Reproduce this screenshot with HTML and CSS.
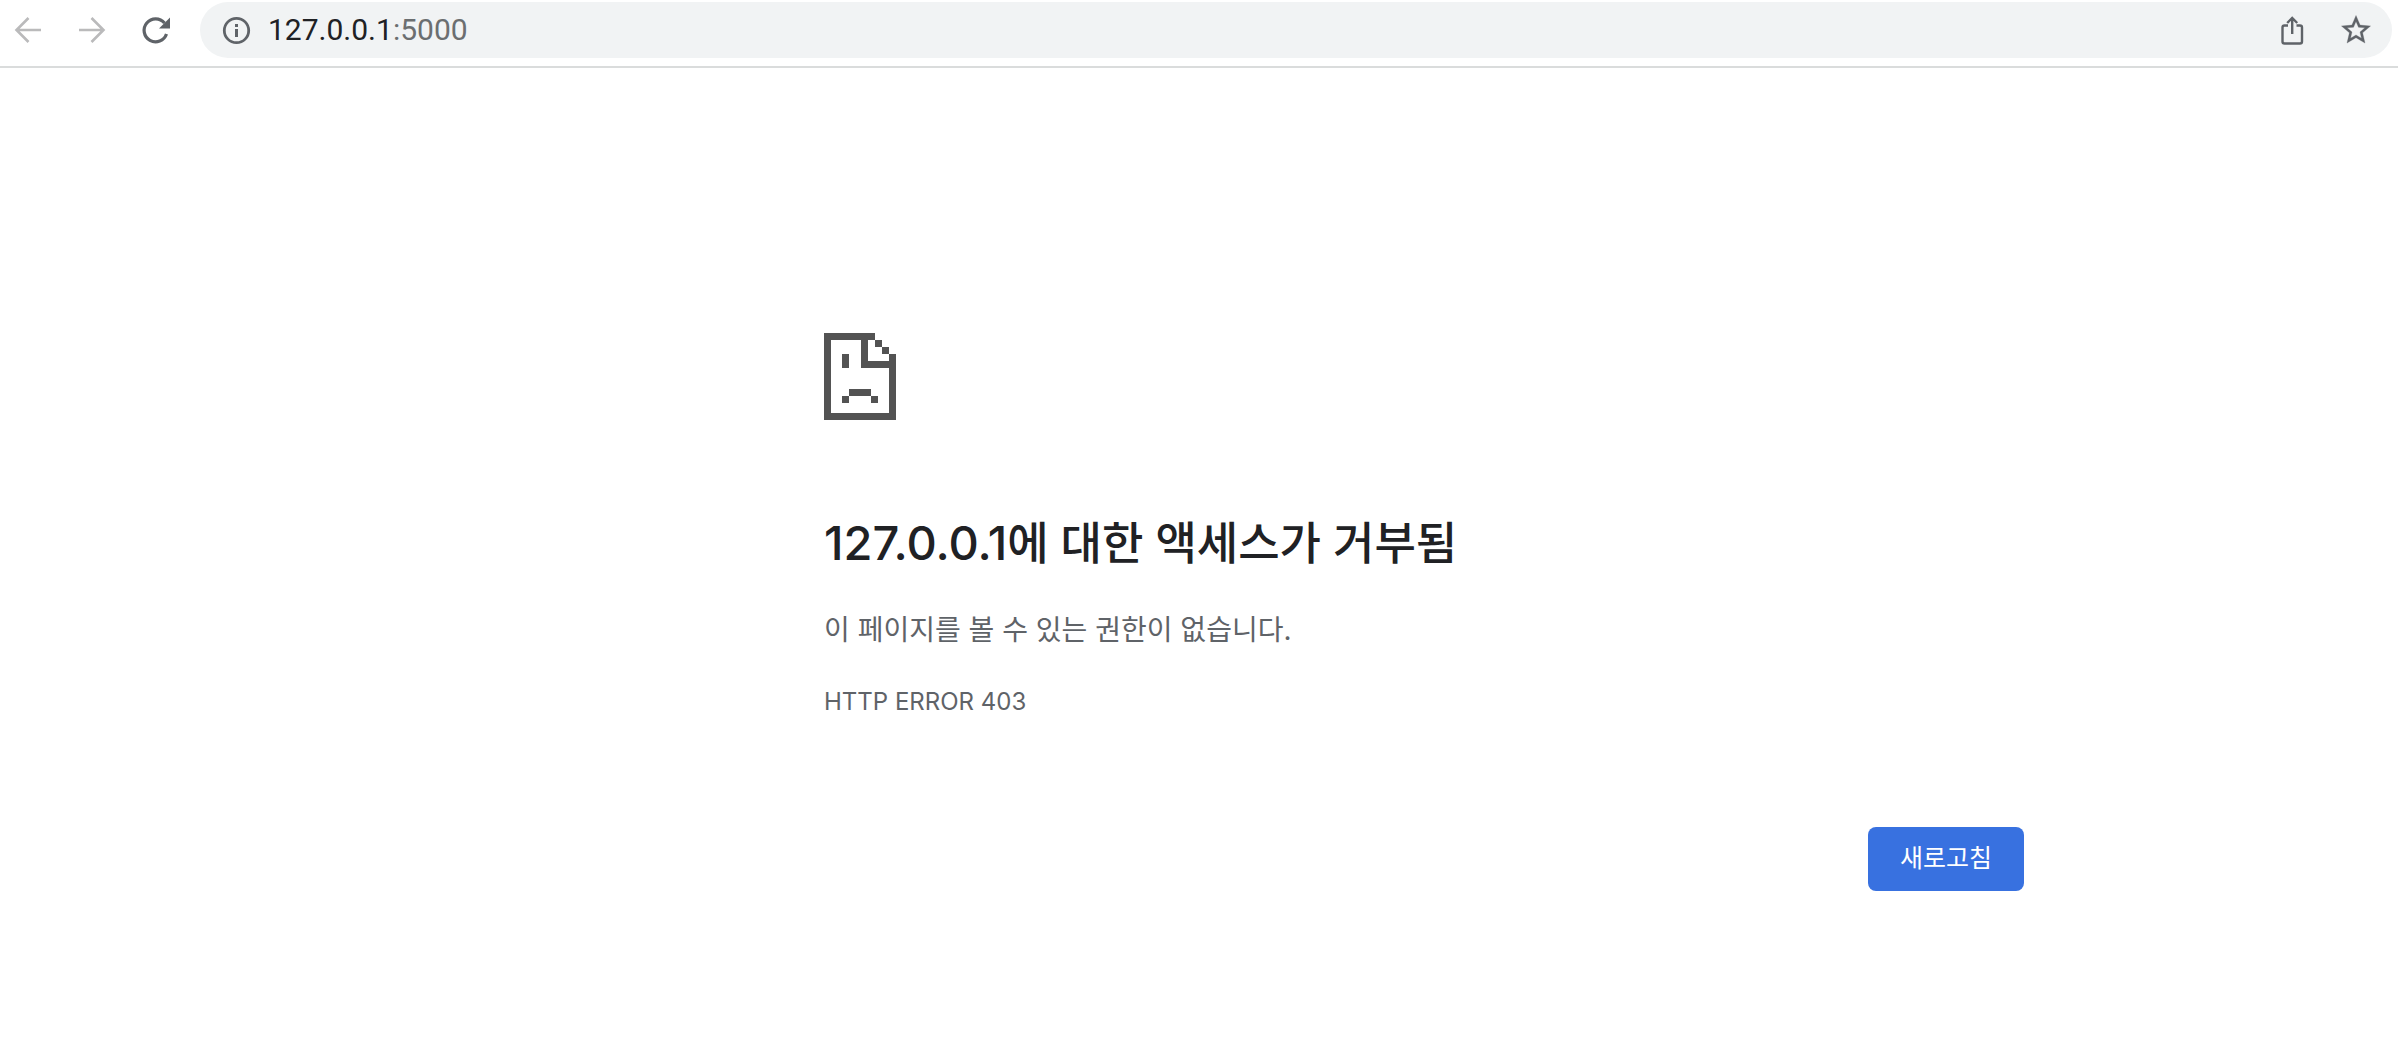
FILE: index.html
```
<!DOCTYPE html>
<html lang="ko">
<head>
<meta charset="utf-8">
<meta name="viewport" content="width=device-width, initial-scale=1">
<title>127.0.0.1</title>
<link rel="stylesheet" href="styles.css">
</head>
<body>
<header class="toolbar">
  <nav class="nav">
    <button class="icon-button" type="button" aria-label="뒤로" disabled>
      <svg viewBox="0 0 32 32" fill="none" stroke="currentColor" stroke-width="2.6"><path d="M29 16H5M16.500 4 4.500 16 16.500 28"/></svg>
    </button>
    <button class="icon-button" type="button" aria-label="앞으로" disabled>
      <svg viewBox="0 0 32 32" fill="none" stroke="currentColor" stroke-width="2.600"><path d="M3 16H27M15.500 4 27.500 16 15.500 28"/></svg>
    </button>
    <button class="icon-button" type="button" aria-label="새로고침">
      <svg viewBox="0 0 32 32"><path d="M26.500 20A11.500 11.500 0 1 1 24.500 9" fill="none" stroke="currentColor" stroke-width="3.200"/><path d="M30 3.500V14.500H19Z" fill="currentColor"/></svg>
    </button>
  </nav>
  <div class="omnibox">
    <button class="icon-button" type="button" aria-label="사이트 정보">
      <svg viewBox="0 0 32 32"><circle cx="16.500" cy="16.500" r="12.200" fill="none" stroke="currentColor" stroke-width="2.800"/><path d="M15 10h3v3h-3zM15 15h3v8h-3z" fill="currentColor"/></svg>
    </button>
    <div class="address">127.0.0.1<span class="port">:5000</span></div>
    <button class="icon-button" type="button" aria-label="공유">
      <svg viewBox="0 0 32 32" fill="none" stroke="currentColor" stroke-width="2.400"><path d="M12 11.500H8.500a2 2 0 0 0-2 2V27.500a2 2 0 0 0 2 2h15.500a2 2 0 0 0 2-2V13.500a2 2 0 0 0-2-2H20.500M16.200 20V4M11.200 9 16.200 4 21.200 9"/></svg>
    </button>
    <button class="icon-button star" type="button" aria-label="북마크">
      <svg viewBox="1 1 22 22" fill="currentColor"><path d="M22 9.240l-7.190-.620L12 2 9.190 8.630 2 9.240l5.460 4.730L5.820 21 12 17.270 18.180 21l-1.630-7.030L22 9.240zM12 15.400l-3.760 2.270 1-4.280-3.320-2.880 4.380-.380L12 6.100l1.710 4.040 4.380.380-3.320 2.880 1 4.280L12 15.400z" stroke="currentColor" stroke-width=".2"/></svg>
    </button>
  </div>
</header>
<main class="page">
  <section class="error">
    <svg class="sad-page" viewBox="0 0 72 87" fill="#535353" shape-rendering="crispEdges" aria-hidden="true"><path d="M0 0H51V7H7V80H65V35H37V7H44V28H65V21H72V87H0ZM51 7H58V14H51ZM58 14H65V21H58ZM18 21H25V35H18ZM25 56H47V63H25ZM18 63H25V70H18ZM47 63H54V70H47Z"/></svg>
    <h1 class="title"><span class="host">127.0.0.1</span>에 대한 액세스가 거부됨</h1>
    <p class="summary">이 페이지를 볼 수 있는 권한이 없습니다.</p>
    <p class="code">HTTP ERROR 403</p>
    <button class="reload" type="button">새로고침</button>
  </section>
</main>
</body>
</html>
```
FILE: styles.css
```
* { box-sizing: border-box; }

body {
  margin: 0;
  background: #fff;
  color: #5f6368;
  font-family: Inter, "Noto Sans CJK KR", sans-serif;
}

button {
  border: 0;
  padding: 0;
  font-family: inherit;
}

.toolbar {
  display: flex;
  align-items: center;
  gap: 28px;
  padding: 2px 6px 8px 12px;
  border-bottom: 2px solid #dadcdc;
}

.nav {
  display: flex;
  gap: 32px;
}

.icon-button {
  flex: none;
  width: 32px;
  height: 32px;
  background: none;
  color: #5f6368;
}

.icon-button:disabled { color: #bababb; }

.icon-button svg {
  display: block;
  width: 100%;
  height: 100%;
}

.omnibox {
  flex: 1;
  display: flex;
  align-items: center;
  gap: 16px;
  height: 56px;
  padding: 0 20px;
  border-radius: 28px;
  background: #f1f3f4;
}

.address {
  flex: 1;
  color: #202124;
  font-family: Roboto, sans-serif;
  font-size: 30px;
  line-height: 32px;
}

.port { color: #6b6e70; }

.star {
  margin-left: 16px;
}

.page {
  display: grid;
  grid-template-columns: 824fr minmax(0, 1200px) 374fr;
  padding: 265px 0 80px;
}

.error {
  grid-column: 2;
  display: flex;
  flex-direction: column;
  align-items: flex-start;
}

.sad-page {
  width: 72px;
  height: 87px;
}

.title {
  margin: 91px 0 0;
  color: #202124;
  font-size: 45px;
  font-weight: 500;
  line-height: 64px;
}

.host { font-size: 47px; }

.summary {
  margin: 36px 0 0;
  font-size: 28px;
  line-height: 36px;
}

.code {
  margin: 38px 0 0;
  font-size: 24px;
  line-height: 32px;
}

.reload {
  align-self: flex-end;
  margin-top: 109px;
  padding: 15px 32px 17px;
  border-radius: 8px;
  background: #3871e0;
  color: #fff;
  font-size: 25px;
  font-weight: 400;
  line-height: 32px;
}
```
